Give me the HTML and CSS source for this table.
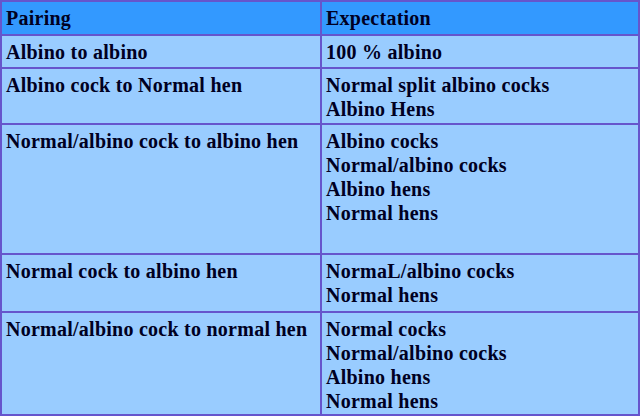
FILE: index.html
```html
<!DOCTYPE html>
<html>
<head>
<meta charset="utf-8">
<link rel="stylesheet" href="styles.css">
</head>
<body>
<table class="grid">
  <tr class="head r0"><th>Pairing</th><th>Expectation</th></tr>
  <tr class="r1"><td>Albino to albino</td><td>100 % albino</td></tr>
  <tr class="r2"><td>Albino cock to Normal hen</td><td>Normal split albino cocks<br>Albino Hens</td></tr>
  <tr class="r3"><td>Normal/albino cock to albino hen</td><td>Albino cocks<br>Normal/albino cocks<br>Albino hens<br>Normal hens</td></tr>
  <tr class="r4"><td>Normal cock to albino hen</td><td>NormaL/albino cocks<br>Normal hens</td></tr>
  <tr class="r5"><td>Normal/albino cock to normal hen</td><td>Normal cocks<br>Normal/albino cocks<br>Albino hens<br>Normal hens</td></tr>
</table>
</body>
</html>
```
FILE: styles.css
```css
html, body {
  margin: 0;
  padding: 0;
  background: #99ccff;
}
.grid {
  width: 640px;
  height: 416px;
  border-collapse: collapse;
  table-layout: fixed;
  font-family: "Liberation Serif", "Times New Roman", serif;
  font-weight: bold;
  font-size: 20px;
  line-height: 24px;
  letter-spacing: 0.25px;
  color: #000022;
  background: #99ccff;
}
.grid th, .grid td {
  border: 2px solid #6655cc;
  text-align: left;
  vertical-align: top;
  padding: 4px 3px 0 4px;
  font-weight: bold;
}
.grid th:first-child, .grid td:first-child {
  width: 311px;
}
.head th {
  background: #3399ff;
}
.r0 { height: 34px; }
.r1 { height: 33px; }
.r2 { height: 56px; }
.r3 { height: 130px; }
.r4 { height: 58px; }
.r5 { height: 103px; }
```
